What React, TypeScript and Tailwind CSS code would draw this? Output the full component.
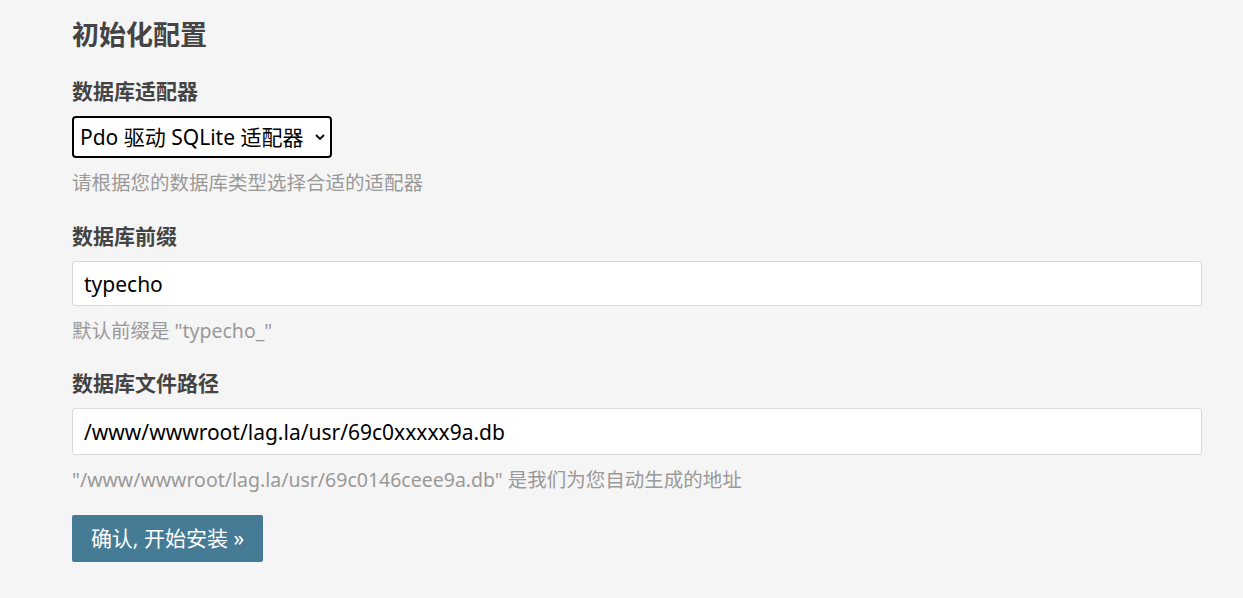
import React, { useState } from 'react';

const font = "font-['Noto_Sans','Noto_Sans_CJK_SC',sans-serif]";

const Label: React.FC<{ children: React.ReactNode; className?: string }> = ({ children, className = '' }) => (
  <div className={`text-[21px] leading-[28px] font-bold text-[#444] ${className}`}>{children}</div>
);

const Hint: React.FC<{ children: React.ReactNode }> = ({ children }) => (
  <p className="mt-3 text-[19.5px] leading-[26px] text-[#999]">{children}</p>
);

const App: React.FC = () => {
  const [prefix, setPrefix] = useState('typecho');
  const [path, setPath] = useState('/www/wwwroot/lag.la/usr/69c0xxxxx9a.db');

  return (
    <div className={`min-h-[598px] bg-[#f6f5f5] ${font}`}>
      <div className="ml-[72px] w-[1130px] pt-[17px]">
        <h2 className="text-[27px] leading-[36px] font-bold text-[#444]">初始化配置</h2>

        <Label className="mt-6">数据库适配器</Label>
        <div className="mt-[11px] flex h-[42px] w-[260px] items-center justify-between rounded-[4px] border-2 border-black bg-white pl-[6px] pr-[4px] text-[21px] text-black">
          <span className="pt-[2px]">Pdo 驱动 SQLite 适配器</span>
          <svg width="12" height="12" viewBox="0 0 12 12" fill="none" stroke="black" strokeWidth="1.8">
            <path d="M2 4l4 4 4-4" />
          </svg>
        </div>
        <Hint>请根据您的数据库类型选择合适的适配器</Hint>

        <Label className="mt-[26px]">数据库前缀</Label>
        <input
          value={prefix}
          onChange={(e) => setPrefix(e.target.value)}
          className="mt-[11px] block h-[45px] w-full rounded-[3px] border border-[#d9d9d6] bg-white px-[11px] text-[21px] text-black outline-none"
        />
        <Hint>默认前缀是 "typecho_"</Hint>

        <Label className="mt-[25px]">数据库文件路径</Label>
        <input
          value={path}
          onChange={(e) => setPath(e.target.value)}
          className="mt-[11px] block h-[47px] w-full rounded-[3px] border border-[#d9d9d6] bg-white px-[11px] text-[21px] text-black outline-none"
        />
        <Hint>"/www/wwwroot/lag.la/usr/69c0146ceee9a.db" 是我们为您自动生成的地址</Hint>

        <button className="mt-[22px] h-[47px] w-[191px] rounded-[2px] bg-[#467b96] text-[21px] text-white">
          确认, 开始安装 »
        </button>
      </div>
    </div>
  );
};

export default App;
